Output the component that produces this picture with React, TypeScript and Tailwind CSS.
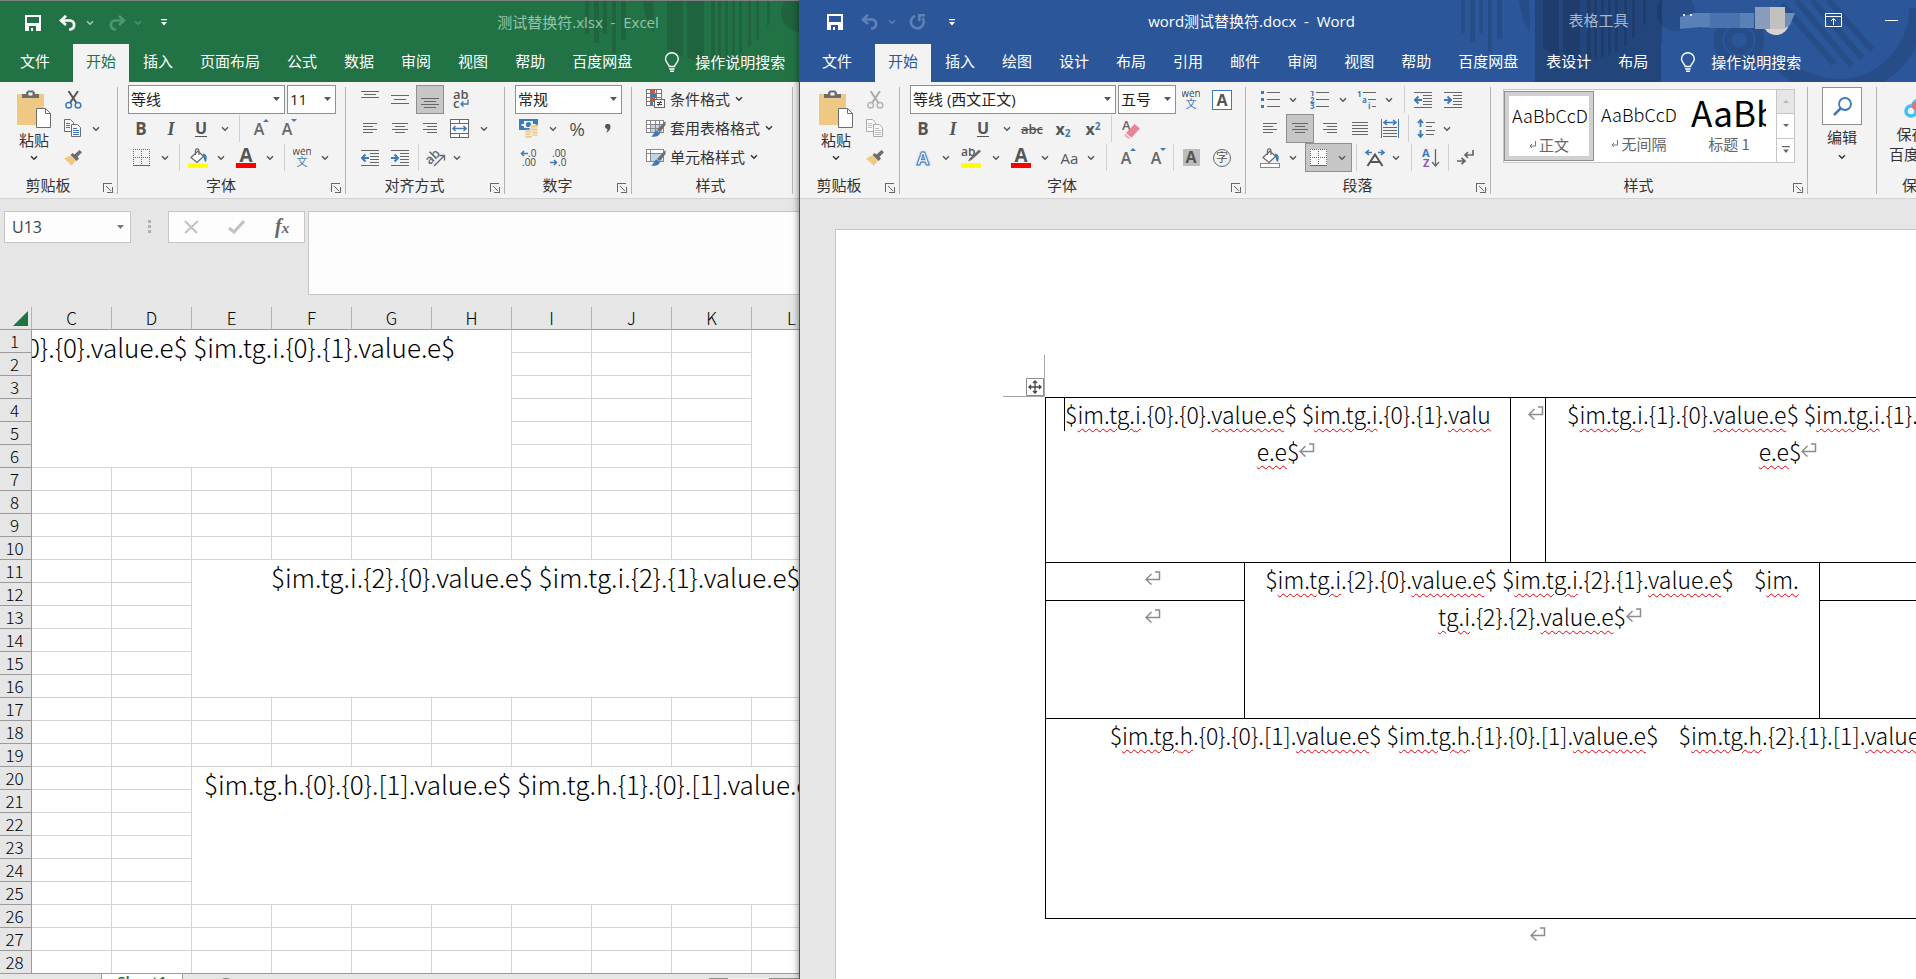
import React from "react";

type Kids = { children?: React.ReactNode };

/* ---------- shared pieces ---------- */

function Chevron({ className = "" }: { className?: string }) {
  return (
    <svg width="8" height="6" viewBox="0 0 8 6" className={className} fill="none" stroke="currentColor" strokeWidth="1.4">
      <path d="M1 1.200 4 4.200 7 1.200" />
    </svg>
  );
}

function Drop({ label, className = "w-[18px]" }: { label: string; className?: string }) {
  return (
    <button aria-label={label} className={`flex h-full shrink-0 items-center justify-center text-[#555] ${className}`}>
      <Chevron />
    </button>
  );
}

function Tool({ label, className = "w-[30px]", children }: { label: string; className?: string } & Kids) {
  return (
    <button aria-label={label} className={`flex h-full shrink-0 items-center justify-center text-[#555] ${className}`}>
      {children}
    </button>
  );
}

function Sep({ className = "mx-[5px]" }: { className?: string }) {
  return <span className={`h-[27px] w-px shrink-0 bg-[#d0d0d0] ${className}`} />;
}

function Row({ className = "", children }: { className?: string } & Kids) {
  return <div className={`flex h-[29px] items-center ${className}`}>{children}</div>;
}

function Launcher() {
  return (
    <svg width="10" height="10" viewBox="0 0 10 10" fill="none" stroke="#666" shapeRendering="crispEdges">
      <path d="M.5 9V.5H9M3 3l5 5M9.500 4v5.500H4" />
    </svg>
  );
}

function Group({ title, launcher = true, className = "", children }: { title: string; launcher?: boolean; className?: string } & Kids) {
  return (
    <section aria-label={title} className={`flex shrink-0 ${className}`}>
      <div className="flex min-w-0 flex-1 flex-col">
        <div className="h-[87px]">{children}</div>
        <div className="flex h-[26px] items-center">
          <span className="flex-1 pr-[3px] text-center whitespace-nowrap">{title}</span>
          {launcher && (
            <button aria-label={`${title}设置`} className="mt-[5px] flex w-[18px] justify-center">
              <Launcher />
            </button>
          )}
        </div>
      </div>
      <span className="mt-[2px] mb-[4px] w-px bg-[#b3b3b3]" />
    </section>
  );
}

function Combo({ label, value, className }: { label: string; value: string; className: string }) {
  return (
    <div className={`relative h-[29px] shrink-0 ${className}`}>
      <select aria-label={label} defaultValue={value} className="h-full w-full appearance-none border border-[#8f8f8f] bg-white pb-[2px] pl-[2px] text-[15px] text-[#222]">
        <option>{value}</option>
      </select>
      <svg width="7" height="4" viewBox="0 0 7 4" className="pointer-events-none absolute top-[12px] right-[5px]">
        <path d="M0 0h7L3.500 4z" fill="#555" />
      </svg>
    </div>
  );
}

function Tab({ active = "", className = "px-[13px]", children }: { active?: string; className?: string } & Kids) {
  return (
    <button className={`h-[38px] shrink-0 pb-[5px] whitespace-nowrap ${className} ${active}`}>{children}</button>
  );
}

/* ---------- title bar icons ---------- */

const SaveIcon = () => (
  <svg width="16" height="16" viewBox="0 0 16 16" shapeRendering="crispEdges">
    <path fill="#fff" fillRule="evenodd" d="M0 0h16v16H0zM2 2v6h12V2zM4 11v5h2v-3h2v3h3v-5z" />
  </svg>
);

const UndoIcon = () => (
  <svg width="19" height="16" viewBox="0 0 19 16" fill="none" stroke="currentColor" strokeWidth="2.600">
    <path d="M2 5.500h9.500a4.600 4.600 0 0 1 0 9H10" />
    <path d="M7 .8 2 5.500 7 10" />
  </svg>
);

const RedoIcon = () => (
  <svg width="19" height="16" viewBox="0 0 19 16" fill="none" stroke="currentColor" strokeWidth="2.600">
    <path d="M17 5.500H7.500a4.600 4.600 0 0 0 0 9H9" />
    <path d="M12 .8l5 4.700L12 10" />
  </svg>
);

const RepeatIcon = () => (
  <svg width="17" height="16" viewBox="0 0 17 16" fill="none" stroke="currentColor" strokeWidth="2.600">
    <path d="M6 1.900A6.400 6.400 0 1 0 13.500 4" />
    <path d="M10.300 7V1.300H16" />
  </svg>
);

const CustomizeIcon = () => (
  <svg width="6" height="7" viewBox="0 0 6 7">
    <path d="M0 0h6v1.300H0zM0 3h6L3 6.500z" fill="#fff" />
  </svg>
);

const Bulb = () => (
  <svg width="16" height="20" viewBox="0 0 16 20" fill="none" stroke="#fff" strokeWidth="1.400">
    <path d="M5.200 14.500c0-2.300-3.700-3.700-3.700-7.400a6.300 6.300 0 0 1 12.800 0c0 3.700-3.700 5.100-3.700 7.400zM5.200 17h5.400M6 19.300h4" />
  </svg>
);

/* ---------- ribbon icons ---------- */

const PasteIcon = () => (
  <svg width="35" height="39" viewBox="0 0 35 39">
    <rect x="0" y="4" width="27" height="31" rx="1" fill="#efc883" />
    <path d="M5 8V4h4V2.500L11 .5h5L18 2.500V4h4v4z" fill="#6d6d6d" />
    <rect x="11.500" y="2.500" width="4" height="3" fill="#f3f3f3" />
    <path d="M19.500 18.500h9l5 5v14h-14z" fill="#fff" stroke="#6d6d6d" />
    <path d="M28.500 18.500v5h5" fill="none" stroke="#6d6d6d" />
  </svg>
);

const CutIcon = ({ off = false }: { off?: boolean }) => (
  <svg width="17" height="18" viewBox="0 0 17 18" fill="none">
    <path d="M3.500 0 11.500 12M13 0 5 12" stroke={off ? "#ababab" : "#555"} strokeWidth="2" />
    <circle cx="3.700" cy="14.200" r="2.800" stroke={off ? "#b5b5b5" : "#3f7ab8"} strokeWidth="1.500" />
    <circle cx="13" cy="14.200" r="2.800" stroke={off ? "#b5b5b5" : "#3f7ab8"} strokeWidth="1.500" />
  </svg>
);

const CopyIcon = ({ off = false }: { off?: boolean }) => {
  const line = off ? "#ababab" : "#6d6d6d";
  const text = off ? "#bdbdbd" : "#3f7ab8";
  return (
    <svg width="18" height="19" viewBox="0 0 18 19" fill="#fafafa">
      <path d="M.5.5h6l3 3v9h-9z" stroke={line} />
      <path d="M2 4.500h4M2 6.500h4M2 8.500h4" stroke={text} />
      <path d="M7.500 5.500h6l3 3v9h-9z" stroke={line} />
      <path d="M9 9.500h4M9 11.500h6M9 13.500h6M9 15.500h6" stroke={text} />
    </svg>
  );
};

const BrushIcon = () => (
  <svg width="18" height="16" viewBox="0 0 18 16">
    <path d="M0 8.500 6 5.500l6 5.500-4.500 4.500z" fill="#efc883" />
    <path d="M6.500 5 8.500 3l2 1.500L15.500 0 18 2.200l-4.500 4.500 1.500 2-2.500 2.200z" fill="#6d6d6d" />
  </svg>
);

type LineSpec = [number, number, number];
function Lines({ w, h, lines }: { w: number; h: number; lines: LineSpec[] }) {
  return (
    <svg width={w} height={h} viewBox={`0 0 ${w} ${h}`} shapeRendering="crispEdges">
      {lines.map(([x, y, len]) => (
        <rect key={`${x}-${y}`} x={x} y={y} width={len} height="1" fill="#666" />
      ))}
    </svg>
  );
}

const TopAlign = () => <Lines w={18} h={18} lines={[[0, 0, 18], [3, 3, 12], [0, 6, 18]]} />;
const MidAlign = () => <Lines w={18} h={18} lines={[[0, 4, 18], [3, 8, 12], [0, 12, 18]]} />;
const BottomAlign = () => <Lines w={18} h={18} lines={[[0, 7, 18], [3, 10, 12], [0, 13, 18], [3, 16, 12]]} />;
const LeftAlign = () => <Lines w={14} h={11} lines={[[0, 0, 14], [0, 3, 10], [0, 6, 14], [0, 9, 10]]} />;
const CenterAlign = () => <Lines w={16} h={11} lines={[[0, 0, 16], [3, 3, 10], [0, 6, 16], [3, 9, 10]]} />;
const RightAlign = () => <Lines w={14} h={11} lines={[[0, 0, 14], [4, 3, 10], [0, 6, 14], [4, 9, 10]]} />;
const Justify = () => <Lines w={16} h={13} lines={[[0, 0, 16], [0, 3, 16], [0, 6, 16], [0, 9, 16], [0, 12, 16]]} />;

const Indent = ({ right = false }: { right?: boolean }) => (
  <svg width="18" height="16" viewBox="0 0 18 16">
    <path d="M0 .5h18M9 3.500h9M9 6.500h9M9 9.500h9M9 12.500h9M0 15.500h18" stroke="#666" shapeRendering="crispEdges" />
    <path d={right ? "M0 8h6M3.500 4.500 7 8l-3.500 3.500" : "M1.500 8H8M4.500 4.500 1 8l3.500 3.500"} stroke="#3f7ab8" strokeWidth="2" fill="none" />
  </svg>
);

const BordersIcon = () => (
  <svg width="17" height="17" viewBox="0 0 17 17" shapeRendering="crispEdges" fill="none" stroke="#666">
    <path d="M0 .5h17M0 8.500h17M.5 0v16M8.500 0v16M16.500 0v16" strokeDasharray="1 1" />
    <path d="M0 16.500h17" />
  </svg>
);

const FillIcon = ({ color, outline = false }: { color: string; outline?: boolean }) => (
  <svg width="20" height="20" viewBox="0 0 20 20">
    <path d="M3 9.500 10 3l5.500 5.500-6.500 6z" fill="#fff" stroke="#666" strokeWidth="1.200" />
    <path d="M7.500 7V2.500a1.700 1.700 0 0 1 3.400 0V7" fill="none" stroke="#666" strokeWidth="1.200" />
    <path d="M14.500 5.500c4 0 5.200 3.500 3.500 8.500-2-.5-2-3-2.500-5.500z" fill="#3f7ab8" />
    <rect x={outline ? 0.5 : 0} y={15.5} width={outline ? 19 : 20} height={outline ? 4 : 4.5} fill={color} stroke={outline ? "#888" : "none"} />
  </svg>
);

const FontColorIcon = () => (
  <span className="flex w-[20px] flex-col items-center">
    <span className="text-[19px] leading-[15px] font-bold text-[#555]">A</span>
    <span className="h-[5px] w-full bg-[#ff0000]" />
  </span>
);

const GrowFont = ({ up = true }: { up?: boolean }) => (
  <span className="relative text-[16px] leading-none font-semibold text-[#666]">
    A
    <svg width="6" height="3" viewBox="0 0 6 3" className="absolute -top-[2px] -right-[5px]">
      <path d={up ? "M0 3h6L3 0z" : "M0 0h6L3 3z"} fill="#3f7ab8" />
    </svg>
  </span>
);

const Phonetic = () => (
  <svg width="18" height="19" viewBox="0 0 18 19" textAnchor="middle">
    <text x="9" y="7" fontSize="10" fill="#444">wén</text>
    <text x="9" y="18" fontSize="11" fill="#3f7ab8">文</text>
  </svg>
);

const WrapIcon = () => (
  <svg width="18" height="19" viewBox="0 0 18 19" fontSize="13" fontWeight="600" fill="#555">
    <text x="1" y="9">ab</text>
    <text x="1" y="18">c</text>
    <path d="M16 9.500v4.500H9M11.500 11.500 9 14l2.500 2.500" fill="none" stroke="#3f7ab8" strokeWidth="1.400" />
  </svg>
);

const MergeIcon = () => (
  <svg width="20" height="19" viewBox="0 0 20 19" shapeRendering="crispEdges">
    <path d="M.5.5h18v18H.5zM.5 4.500h18M.5 14.500h18M9.500.5v4M9.500 14.500v4" fill="#fff" stroke="#666" />
    <path d="M3 9.500h13M5.500 7 3 9.500 5.500 12M13.500 7 16 9.500 13.500 12" fill="none" stroke="#3f7ab8" shapeRendering="auto" strokeWidth="1.500" />
  </svg>
);

const OrientIcon = () => (
  <svg width="20" height="18" viewBox="0 0 20 18" fill="none" stroke="#666" strokeWidth="1.300">
    <text x="0" y="13" fontSize="13" fontWeight="600" fill="#666" stroke="none" transform="rotate(-45 6 10)">ab</text>
    <path d="M8 17 18 7M13.500 6.500H18.500V11.500" />
  </svg>
);

const CurrencyIcon = () => (
  <svg width="20" height="19" viewBox="0 0 20 19">
    <path d="M0 0h19v11H0z" fill="#3f7ab8" />
    <path d="M2.500 2h14v7h-14z" fill="#f3f3f3" />
    <path d="M2 2h3v3H2zM14 2h3v3h-3zM2 7h3v2H2z" fill="#3f7ab8" />
    <circle cx="9.500" cy="5.500" r="2.600" fill="#3f7ab8" />
    <rect x="11" y="6" width="8" height="11" rx="1.500" fill="#efc883" stroke="#f3f3f3" strokeWidth=".6" />
    <rect x="6" y="11" width="7" height="8" rx="1.500" fill="#efc883" stroke="#f3f3f3" strokeWidth=".6" />
    <path d="M11 9h8M11 12h8M11 15h8M6 14h7M6 16.500h7" stroke="#f3f3f3" />
  </svg>
);

const DecimalIcon = ({ more }: { more: boolean }) => (
  <svg width="18" height="18" viewBox="0 0 18 18" fontSize="10" fill="#444">
    {more ? (
      <>
        <text x="8" y="8">.0</text>
        <text x="2" y="17">.00</text>
      </>
    ) : (
      <>
        <text x="2" y="8">.00</text>
        <text x="8" y="17">.0</text>
      </>
    )}
    <path d={more ? "M8 4.500H2M4 2 1.500 4.500 4 7" : "M0 13.500h6M4 11l2.500 2.500L4 16"} stroke="#3f7ab8" strokeWidth="1.600" fill="none" />
  </svg>
);

const CondIcon = () => (
  <svg width="20" height="19" viewBox="0 0 20 19" shapeRendering="crispEdges">
    <path d="M.5.5h15v16H.5z" fill="#fff" />
    <path d="M4.500 1h4v4h-4zM4.500 9h4v3h-4z" fill="#d35230" />
    <path d="M4.500 5h5v4h-5zM4.500 13h2v4h-2z" fill="#3f7ab8" />
    <path d="M.5.5h15v16H.5zM.5 4.500h15M.5 8.500h15M.5 12.500h15M4.500.5v16M10.500.5v12" fill="none" stroke="#777" />
    <path d="M8.500 10.500h10v8h-10z" fill="#fff" stroke="#666" />
    <path d="M11 13.500h5M11 15.500h5M15 12l-3 5" stroke="#444" shapeRendering="auto" />
  </svg>
);

const TableStyleIcon = ({ single = false }: { single?: boolean }) => (
  <svg width="20" height="18" viewBox="0 0 20 18">
    <path d="M.5 1.500h17v12H.5z" fill="#fff" />
    <path d="M4.500 5.500h12v8h-12z" fill="#bfd3ea" />
    <path d={single ? "M.5 1.500h17v12H.5zM.5 5.500h17M4.500 1.500v12" : "M.5 1.500h17v12H.5zM.5 5.500h17M.5 9.500h17M4.500 1.500v12M9.500 1.500v12M13.500 1.500v12"} fill="none" stroke="#888" shapeRendering="crispEdges" />
    <path d="M19.500 2v4L14 13l-3-2z" fill="#6d6d6d" />
    <path d="M10.500 11.500 14 14c-1 4-5 4-9 3.500 2.500-1 3-5 5.500-6z" fill="#3f7ab8" />
  </svg>
);

/* ---------- Word-only ribbon icons ---------- */

const EraserIcon = () => (
  <svg width="18" height="20" viewBox="0 0 18 20">
    <text x="0" y="11" fontSize="13" fontWeight="600" fill="#666">A</text>
    <path d="M4 14 12.500 5 18 9.500 9.500 18.500z" fill="#e98297" />
    <path d="M3 14.500 8.500 19.500l-2 .5L2.500 17z" fill="#f5a9b8" />
  </svg>
);

const HighlightIcon = () => (
  <svg width="20" height="20" viewBox="0 0 20 20">
    <text x="0" y="8" fontSize="12" fontWeight="600" fill="#555">ab</text>
    <path d="M18 1.500 20 3.500 10.500 12 7 13.500 8.500 10.500z" fill="#6d6d6d" />
    <path d="M0 15h20v5H0z" fill="#ffff00" />
  </svg>
);

const ListIcon = ({ kind }: { kind: "dots" | "numbers" | "levels" }) => (
  <svg width="19" height="18" viewBox="0 0 19 18" shapeRendering="crispEdges" fontSize="8" fontWeight="700" fill="#3f7ab8">
    {kind === "dots" && (
      <>
        <path d="M0 0h3v3H0zM0 7h3v3H0zM0 14h3v3H0z" />
        <path d="M6 1.500h13M6 8.500h13M6 15.500h13" stroke="#666" />
      </>
    )}
    {kind === "numbers" && (
      <>
        <text x="0" y="5">1</text>
        <text x="0" y="12">2</text>
        <text x="0" y="18">3</text>
        <path d="M6 1.500h13M6 8.500h13M6 15.500h13" stroke="#666" />
      </>
    )}
    {kind === "levels" && (
      <>
        <text x="0" y="6">1</text>
        <text x="5" y="12">a</text>
        <text x="11" y="18">i</text>
        <path d="M6 1.500h13M11 8.500h8M15 15.500h4" stroke="#666" />
      </>
    )}
  </svg>
);

const DistributeIcon = () => (
  <svg width="18" height="19" viewBox="0 0 18 19" fill="none" shapeRendering="crispEdges">
    <path d="M.5 0v19M17.500 0v19" stroke="#3f7ab8" />
    <path d="M2 8.500h14M2 11.500h14M2 14.500h14M2 17.500h14" stroke="#666" />
    <path d="M3 3.500h12M6 1 3 3.500 6 6M12 1l3 2.500L12 6" stroke="#3f7ab8" strokeWidth="1.600" shapeRendering="auto" />
  </svg>
);

const SpacingIcon = () => (
  <svg width="18" height="19" viewBox="0 0 18 19" fill="none">
    <path d="M3.500 1v7M1 4l2.500-3L6 4M3.500 11v7M1 15l2.500 3L6 15" stroke="#3f7ab8" strokeWidth="1.800" />
    <path d="M9 3.500h9M9 7.500h6M9 11.500h9M9 15.500h8" stroke="#666" shapeRendering="crispEdges" />
  </svg>
);

const ScaleIcon = () => (
  <svg width="20" height="18" viewBox="0 0 20 18" fill="none">
    <path d="M1 3.500h6M4 1 1 3.500 4 6M13 3.500h6M16 1l3 2.500L16 6" stroke="#3f7ab8" strokeWidth="1.600" />
    <path d="M2.500 17 10 5.500 17.500 17M5 13h10" stroke="#555" strokeWidth="2" />
  </svg>
);

const SortIcon = () => (
  <svg width="18" height="20" viewBox="0 0 18 20">
    <text x="0" y="9" fontSize="11" fontWeight="700" fill="#3f7ab8">A</text>
    <text x="1" y="19" fontSize="11" fontWeight="700" fill="#8c55b5">Z</text>
    <path d="M13.500 1v17M10 14l3.500 4 3.500-4" fill="none" stroke="#666" strokeWidth="1.300" />
  </svg>
);

const MarksIcon = () => (
  <svg width="18" height="15" viewBox="0 0 18 15" fill="none" stroke="#666" strokeWidth="1.700">
    <path d="M16 0v5H8M11 2 8 5l3 3M0 11h7M4.500 8 8 11l-3.500 3" />
  </svg>
);

/* ---------- window header artwork ---------- */

function Circuit({ id, className, tone }: { id: string; className: string; tone: string }) {
  return (
    <svg width="240" height="82" viewBox="0 0 240 82" className={`pointer-events-none absolute top-0 ${className}`} fill={tone}>
      <defs>
        <clipPath id={id}>
          <circle cx="122" cy="-10" r="70" />
        </clipPath>
      </defs>
      <path d="M0 0h4v33H0zM9 0h5v42H9zM18 0h4v33h-4zM27 0h4v52h-4zM36 0h5v39h-5zM58 0h10l1 32Q60 20 58 0z" />
      <g clipPath={`url(#${id})`}>
        <path d="M82 0h16v60H82zM102 0h17v60h-17zM126 0h4v60h-4zM133 0h3v60h-3zM140 0h3v60h-3zM147 0h3v60h-3zM154 0h3v60h-3zM163 0h3v60h-3zM171 0h3v60h-3zM182 0h3v60h-3z" />
      </g>
      <circle cx="215" cy="12" r="19" />
    </svg>
  );
}

function Orbit({ className, tone }: { className: string; tone: string }) {
  return (
    <svg width="216" height="82" viewBox="0 0 216 82" className={`pointer-events-none absolute top-0 ${className}`} fill="none" stroke={tone}>
      <circle cx="39" cy="40" r="21" strokeWidth="9" />
      <circle cx="39" cy="40" r="11" strokeWidth="7" />
      <circle cx="138" cy="8" r="79" strokeWidth="16" strokeDasharray="190 400" />
      <path d="M82 4l52 60M96 0l56 66M112 0l50 58M128 0l44 50" strokeWidth="6" />
    </svg>
  );
}

/* ---------- Excel ---------- */

const columns = ["C", "D", "E", "F", "G", "H", "I", "J", "K", "L"];
const rowNumbers = Array.from({ length: 28 }, (_, i) => i + 1);

function GridCells({ count }: { count: number }) {
  return (
    <>
      {Array.from({ length: count }, (_, i) => (
        <td key={i} className="border-r border-b border-[#d4d4d4]" />
      ))}
    </>
  );
}

function SheetRow({ n }: { n: number }) {
  let cells: React.ReactNode;
  const merged = "border-r border-b border-[#d4d4d4] p-0 align-top";
  const text = "-mt-[2px] flex overflow-hidden text-[26px] leading-[38px] font-light whitespace-pre";
  if (n === 1) {
    cells = (
      <>
        <td colSpan={6} rowSpan={6} className={merged}>
          <div className={`${text} justify-end pr-[56px]`}>
            <span className="shrink-0">{"$im.tg.i.{0}.{0}.value.e$ $im.tg.i.{0}.{1}.value.e$"}</span>
          </div>
        </td>
        <GridCells count={3} />
        <td rowSpan={6} className={merged} />
      </>
    );
  } else if (n < 7) cells = <GridCells count={3} />;
  else if (n === 11)
    cells = (
      <>
        <GridCells count={2} />
        <td colSpan={8} rowSpan={6} className={merged}>
          <div className={`${text} pl-[79px]`}>{"$im.tg.i.{2}.{0}.value.e$ $im.tg.i.{2}.{1}.value.e$"}</div>
        </td>
      </>
    );
  else if (n === 20)
    cells = (
      <>
        <GridCells count={2} />
        <td colSpan={8} rowSpan={6} className={merged}>
          <div className={`${text} pl-[12px]`}>{"$im.tg.h.{0}.{0}.[1].value.e$ $im.tg.h.{1}.{0}.[1].value.e$"}</div>
        </td>
      </>
    );
  else if ((n > 11 && n < 17) || (n > 20 && n < 26)) cells = <GridCells count={2} />;
  else cells = <GridCells count={10} />;
  return (
    <tr className="h-[23px]">
      <th scope="row" className="border-r border-b border-[#9b9b9b] bg-[#e6e6e6] p-0 pr-[2px] text-center text-[17px] leading-[20px] font-light">
        {n}
      </th>
      {cells}
    </tr>
  );
}

function Excel() {
  return (
    <main className="flex min-w-0 flex-col overflow-hidden border-t border-[#808080] bg-[#e6e6e6]">
      <header className="relative bg-[#217346] text-white">
        <Circuit id="arc-sheet" className="left-[585px]" tone="#1f633f" />
        <div className="relative flex h-[43px] items-center">
          <div className="flex w-[357px] shrink-0 items-center pl-[25px]">
            <button aria-label="保存"><SaveIcon /></button>
            <button aria-label="撤消" className="ml-[18px]"><UndoIcon /></button>
            <button aria-label="撤消选项" className="ml-[8px] text-[#a9ccb8]"><Chevron /></button>
            <button aria-label="恢复" className="ml-[13px] text-[#4f9570]"><RedoIcon /></button>
            <button aria-label="恢复选项" className="ml-[8px] text-[#4f9570]"><Chevron /></button>
            <button aria-label="自定义快速访问工具栏" className="ml-[19px]"><CustomizeIcon /></button>
          </div>
          <h1 className="flex-1 pb-[2px] text-center whitespace-pre text-[#97c4a9]">{"测试替换符.xlsx  -  Excel"}</h1>
        </div>
        <nav className="relative flex gap-px pl-[7px]">
          <Tab>文件</Tab>
          <Tab active="ml-[9px] bg-[#f3f3f3] text-[#217346]">开始</Tab>
          <Tab>插入</Tab>
          <Tab>页面布局</Tab>
          <Tab>公式</Tab>
          <Tab>数据</Tab>
          <Tab>审阅</Tab>
          <Tab>视图</Tab>
          <Tab>帮助</Tab>
          <Tab>百度网盘</Tab>
          <button className="ml-[18px] flex shrink-0 items-center gap-[15px] pb-[2px] whitespace-nowrap"><Bulb />操作说明搜索</button>
        </nav>
      </header>

      <div className="flex h-[117px] shrink-0 border-b border-[#d2d2d2] bg-[#f3f3f3] pt-[3px] text-[#333]">
        <Group title="剪贴板" className="w-[118px]">
          <div className="flex">
            <button className="flex w-[59px] flex-col items-center pt-[5px] pl-[9px]">
              <PasteIcon />
              <span className="leading-[22px]">粘贴</span>
              <Chevron className="mt-[4px]" />
            </button>
            <div>
              <Row><Tool label="剪切" className="w-[28px]"><CutIcon /></Tool></Row>
              <Row>
                <Tool label="复制" className="w-[28px]"><CopyIcon /></Tool>
                <Drop label="复制选项" />
              </Row>
              <Row><Tool label="格式刷" className="w-[28px]"><BrushIcon /></Tool></Row>
            </div>
          </div>
        </Group>

        <Group title="字体" className="w-[228px]">
          <Row className="gap-[2px] pl-[10px]">
            <Combo label="字体" value="等线" className="w-[157px]" />
            <Combo label="字号" value="11" className="w-[49px]" />
          </Row>
          <Row className="pl-[8px]">
            <Tool label="加粗"><b className="text-[17px]">B</b></Tool>
            <Tool label="倾斜"><b className="font-['Liberation_Serif',serif] text-[18px] italic">I</b></Tool>
            <Tool label="下划线"><b className="border-b border-[#555] text-[16px] leading-[16px]">U</b></Tool>
            <Drop label="下划线选项" />
            <Sep />
            <Tool label="增大字号" className="w-[28px]"><GrowFont /></Tool>
            <Tool label="减小字号" className="w-[28px]"><GrowFont up={false} /></Tool>
          </Row>
          <Row className="pl-[8px]">
            <Tool label="边框"><BordersIcon /></Tool>
            <Drop label="边框选项" />
            <Sep />
            <Tool label="填充颜色" className="w-[26px]"><FillIcon color="#ffff00" /></Tool>
            <Drop label="填充颜色选项" className="w-[20px]" />
            <Tool label="字体颜色"><FontColorIcon /></Tool>
            <Drop label="字体颜色选项" />
            <Sep />
            <Tool label="拼音" className="w-[24px]"><Phonetic /></Tool>
            <Drop label="拼音选项" className="w-[22px]" />
          </Row>
        </Group>

        <Group title="对齐方式" className="w-[159px]">
          <Row className="pl-[9px]">
            <Tool label="顶端对齐"><TopAlign /></Tool>
            <Tool label="垂直居中"><MidAlign /></Tool>
            <Tool label="底端对齐" className="mx-px w-[28px] border border-[#8f8f8f] bg-[#c6c6c6]"><BottomAlign /></Tool>
            <Tool label="自动换行" className="w-[32px]"><WrapIcon /></Tool>
          </Row>
          <Row className="pl-[9px]">
            <Tool label="左对齐"><LeftAlign /></Tool>
            <Tool label="居中"><CenterAlign /></Tool>
            <Tool label="右对齐"><RightAlign /></Tool>
            <Tool label="合并后居中"><MergeIcon /></Tool>
            <Drop label="合并选项" />
          </Row>
          <Row className="pl-[9px]">
            <Tool label="减少缩进量"><Indent /></Tool>
            <Tool label="增加缩进量"><Indent right /></Tool>
            <Sep className="mx-[3px]" />
            <Tool label="方向" className="w-[28px]"><OrientIcon /></Tool>
            <Drop label="方向选项" className="w-[14px]" />
          </Row>
        </Group>

        <Group title="数字" className="w-[127px]">
          <Row className="pl-[10px]"><Combo label="数字格式" value="常规" className="w-[107px]" /></Row>
          <Row className="pl-[9px]">
            <Tool label="会计数字格式"><CurrencyIcon /></Tool>
            <Drop label="会计数字格式选项" />
            <Tool label="百分比样式"><span className="text-[19px]">%</span></Tool>
            <Tool label="千位分隔样式" className="w-[32px]">
              <svg width="6" height="9" viewBox="0 0 6 9"><path d="M0 2.500a2.500 2.500 0 0 1 5.500 0c0 3-2 5.500-4.500 6.200 1-1.200 1.500-2.500 1.400-3.700A2.500 2.500 0 0 1 0 2.500z" fill="#555" /></svg>
            </Tool>
          </Row>
          <Row className="pl-[9px]">
            <Tool label="增加小数位数"><DecimalIcon more /></Tool>
            <Tool label="减少小数位数"><DecimalIcon more={false} /></Tool>
          </Row>
        </Group>

        <Group title="样式" launcher={false} className="w-[161px]">
          <Row className="pb-[2px] pl-[14px]"><button className="flex items-center gap-[4px]"><CondIcon />条件格式<Chevron className="ml-[1px]" /></button></Row>
          <Row className="pb-[2px] pl-[14px]"><button className="flex items-center gap-[4px]"><TableStyleIcon />套用表格格式<Chevron className="ml-[1px]" /></button></Row>
          <Row className="pb-[2px] pl-[14px]"><button className="flex items-center gap-[4px]"><TableStyleIcon single />单元格样式<Chevron className="ml-[1px]" /></button></Row>
        </Group>
      </div>

      <div className="flex items-start pt-[12px] pl-[4px]">
        <div className="relative w-[127px] shrink-0">
          <input aria-label="名称框" defaultValue="U13" className="h-[32px] w-full border border-[#c6c6c6] bg-[#fdfdfd] pl-[7px] text-[16px] text-[#444]" />
          <svg width="7" height="4" viewBox="0 0 7 4" className="pointer-events-none absolute top-[14px] right-[7px]"><path d="M0 0h7L3.500 4z" fill="#777" /></svg>
        </div>
        <svg width="37" height="32" viewBox="0 0 37 32" fill="#b0b0b0"><path d="M17 9h3v3h-3zM17 14h3v3h-3zM17 19h3v3h-3z" /></svg>
        <div className="flex h-[32px] w-[137px] shrink-0 items-center justify-around border border-[#c6c6c6] bg-[#fdfdfd]">
          <button aria-label="取消"><svg width="15" height="14" viewBox="0 0 15 14" fill="none" stroke="#c2c2c2" strokeWidth="2"><path d="M1 1l12 12M14 1 1 13" /></svg></button>
          <button aria-label="输入"><svg width="17" height="14" viewBox="0 0 17 14" fill="none" stroke="#c2c2c2" strokeWidth="3"><path d="M1 8l5 4L16 1" /></svg></button>
          <button aria-label="插入函数" className="pb-[3px] font-['Liberation_Serif',serif] text-[20px] leading-none font-bold text-[#666] italic">f<span className="text-[15px]">x</span></button>
        </div>
        <textarea aria-label="编辑栏" className="ml-[3px] h-[84px] min-w-0 flex-1 resize-none border border-r-0 border-[#c6c6c6] bg-[#fdfdfd]" />
      </div>

      <div className="mt-[12px] min-h-0 flex-1 overflow-hidden font-['Noto_Sans_CJK_SC',sans-serif] text-black">
        <table className="w-[832px] table-fixed border-separate border-spacing-0 bg-white">
          <colgroup>
            <col className="w-[32px]" />
            {columns.map((c) => <col key={c} className="w-[80px]" />)}
          </colgroup>
          <thead>
            <tr className="h-[23px] bg-[#e6e6e6]">
              <th className="border-r border-b border-r-[#b5b5b5] border-b-[#9b9b9b] p-0">
                <svg width="15" height="15" viewBox="0 0 15 15" className="ml-[13px]"><path d="M15 0v15H0z" fill="#217346" /></svg>
              </th>
              {columns.map((c) => (
                <th key={c} scope="col" className="border-r border-b border-r-[#b5b5b5] border-b-[#9b9b9b] p-0 text-[17px] leading-[22px] font-light">{c}</th>
              ))}
            </tr>
          </thead>
          <tbody>{rowNumbers.map((n) => <SheetRow key={n} n={n} />)}</tbody>
        </table>
      </div>

      <footer className="flex h-[6px] shrink-0 overflow-hidden border-t border-[#9b9b9b] pl-[101px]">
        <a href="#sheet1" className="-mt-px h-[30px] w-[82px] border-x border-[#9b9b9b] bg-white text-center leading-[16px] font-semibold text-[#217346]">Sheet1</a>
        <svg width="20" height="20" viewBox="0 0 20 20" className="mt-[4px] ml-[34px] shrink-0" fill="none" stroke="#777"><circle cx="9" cy="9" r="8.500" /></svg>
        <div className="mt-[4px] ml-auto flex h-[20px] w-[90px] shrink-0 bg-[#f3f3f3]">
          <span className="w-[19px] bg-[#8f8f8f]" />
          <span className="ml-[41px] flex-1 bg-[#8f8f8f]" />
        </div>
      </footer>
    </main>
  );
}

/* ---------- Word ---------- */

function StyleCard({ sample, name, mark = true, selected = false, large = false }: { sample: string; name: string; mark?: boolean; selected?: boolean; large?: boolean }) {
  return (
    <button className={`flex h-[70px] w-[90px] shrink-0 flex-col overflow-hidden bg-white px-[3px] ${selected ? "border border-[#8f8f8f] outline-4 -outline-offset-5 outline-[#d0d0d0]" : ""}`}>
      <span className={`ml-[4px] flex h-[41px] w-[75px] items-end overflow-hidden text-left whitespace-nowrap text-black ${large ? "text-[35px] leading-[40px]" : "text-[18px] leading-[36px] font-light"}`}>
        {sample}
      </span>
      <span className="flex w-full items-center justify-center gap-[3px] leading-[24px] text-[#666]">
        {mark && <svg width="7" height="8" viewBox="0 0 7 8" fill="none" stroke="#777"><path d="M6.500 0v5H1M3 3 1 5l2 2" /></svg>}
        {name}
      </span>
    </button>
  );
}

function Return() {
  return (
    <span className="inline-block w-0 align-[4px]">
      <svg width="16" height="14" viewBox="0 0 16 14" fill="none" stroke="#8c8c8c" strokeWidth="1.500">
        <path d="M10 1h4.500v7.500H1.500M6.500 3 1 8.500l5.500 5" />
      </svg>
    </span>
  );
}

function Bad({ children }: Kids) {
  return <span className="underline decoration-red-600 decoration-wavy decoration-1 underline-offset-4">{children}</span>;
}

function Token({ kind, refs }: { kind: "i" | "h"; refs: string }) {
  return (
    <>
      $<Bad>im.tg.{kind}</Bad>.{refs}.<Bad>value.e</Bad>$
    </>
  );
}

function Cell({ colSpan, rowSpan, children }: { colSpan?: number; rowSpan?: number } & Kids) {
  return (
    <td colSpan={colSpan} rowSpan={rowSpan} className="border border-black p-0 text-center align-top whitespace-pre">
      <div className="-mt-[2px]">{children}</div>
    </td>
  );
}

function Word() {
  return (
    <section className="relative flex min-w-0 flex-col overflow-hidden border-l border-[#2b579a] bg-[#e6e6e6]">
      <header className="relative shrink-0 overflow-hidden bg-[#2b579a] text-white">
        <Circuit id="arc-doc" className="left-[661px]" tone="#264d87" />
        <Orbit className="left-[900px]" tone="#264d87" />
        <div className="relative flex h-[44px] items-center">
          <div className="flex w-[168px] shrink-0 items-center pl-[27px]">
            <button aria-label="保存"><SaveIcon /></button>
            <button aria-label="撤消" className="ml-[18px] text-[#5f82b5]"><UndoIcon /></button>
            <button aria-label="撤消选项" className="ml-[8px] text-[#5f82b5]"><Chevron /></button>
            <button aria-label="重复" className="ml-[13px] text-[#5f82b5]"><RepeatIcon /></button>
            <button aria-label="自定义快速访问工具栏" className="ml-[23px]"><CustomizeIcon /></button>
          </div>
          <h1 className="flex-1 pb-[2px] text-center whitespace-pre">{"word测试替换符.docx  -  Word"}</h1>
          <div className="flex h-full w-[127px] shrink-0 items-center justify-center bg-black/20 pb-[4px] text-[#a8b8d2]">表格工具</div>
          <div className="flex w-[254px] shrink-0 items-center pb-[4px]">
            <svg role="img" aria-label="账户" width="116" height="30" viewBox="0 0 116 30" className="ml-[18px]">
              <path d="M0 12 14 8h60v15H40L20 22 0 24z" fill="#5a80b8" />
              <path d="M30 8h30v15H30z" fill="#4a72ae" />
              <path d="M3 9h2v2H3zM10 9h2v2h-2z" fill="#dfe6f0" />
              <circle cx="96" cy="17" r="13" fill="#d9d4cf" />
              <path d="M105 8h10l-5 12-5 3z" fill="#6f8db9" />
              <path d="M75 2h15v22H75z" fill="#8a9cbb" />
              <path d="M90 2h15v22H90z" fill="#c3c0c0" />
            </svg>
            <button aria-label="功能区显示选项" className="ml-[29px]">
              <svg width="17" height="14" viewBox="0 0 17 14" fill="none" stroke="#fff"><path d="M.5.5h16v13H.5zM.5 3.500h16M8.500 12V6M6 8l2.500-2.500L11 8" /></svg>
            </button>
            <button aria-label="最小化" className="ml-[43px] h-px w-[13px] bg-white" />
          </div>
        </div>
        <nav className="relative flex gap-px pl-[9px]">
          <Tab>文件</Tab>
          <Tab active="ml-[9px] bg-[#f3f3f3] text-[#2b579a]">开始</Tab>
          <Tab>插入</Tab>
          <Tab>绘图</Tab>
          <Tab>设计</Tab>
          <Tab>布局</Tab>
          <Tab>引用</Tab>
          <Tab>邮件</Tab>
          <Tab>审阅</Tab>
          <Tab>视图</Tab>
          <Tab>帮助</Tab>
          <Tab>百度网盘</Tab>
          <div className="ml-[3px] flex gap-px bg-black/20">
            <Tab className="pr-[13px] pl-[11px]">表设计</Tab>
            <Tab>布局</Tab>
          </div>
          <button className="ml-[18px] flex shrink-0 items-center gap-[15px] pb-[2px] whitespace-nowrap"><Bulb />操作说明搜索</button>
        </nav>
      </header>

      <div className="flex h-[117px] shrink-0 border-b border-[#d2d2d2] bg-[#f3f3f3] pt-[3px] text-[#333]">
        <Group title="剪贴板" className="w-[100px]">
          <div className="flex">
            <button className="flex w-[61px] flex-col items-center pt-[5px] pl-[11px]">
              <PasteIcon />
              <span className="leading-[22px]">粘贴</span>
              <Chevron className="mt-[4px]" />
            </button>
            <div>
              <Row><Tool label="剪切" className="w-[28px]"><CutIcon off /></Tool></Row>
              <Row><Tool label="复制" className="w-[28px]"><CopyIcon off /></Tool></Row>
              <Row><Tool label="格式刷" className="w-[28px]"><BrushIcon /></Tool></Row>
            </div>
          </div>
        </Group>

        <Group title="字体" className="w-[346px]">
          <Row className="pl-[10px]">
            <Combo label="字体" value="等线 (西文正文)" className="mr-[2px] w-[206px]" />
            <Combo label="字号" value="五号" className="w-[58px]" />
            <Tool label="拼音指南"><Phonetic /></Tool>
            <Tool label="字符边框" className="w-[32px]">
              <span className="h-[20px] w-[20px] border border-[#3f7ab8] bg-white text-[16px] leading-[18px] font-bold">A</span>
            </Tool>
          </Row>
          <Row className="pl-[8px]">
            <Tool label="加粗"><b className="text-[17px]">B</b></Tool>
            <Tool label="倾斜"><b className="font-['Liberation_Serif',serif] text-[18px] italic">I</b></Tool>
            <Tool label="下划线"><b className="border-b border-[#555] text-[16px] leading-[16px]">U</b></Tool>
            <Drop label="下划线选项" />
            <Tool label="删除线" className="w-[32px]"><s className="text-[13px] font-semibold">abc</s></Tool>
            <Tool label="下标"><b className="text-[16px]">x<sub className="text-[10px] text-[#3f7ab8]">2</sub></b></Tool>
            <Tool label="上标"><b className="text-[16px]">x<sup className="text-[10px] text-[#3f7ab8]">2</sup></b></Tool>
            <Sep className="mx-[3px]" />
            <Tool label="清除格式" className="w-[32px]"><EraserIcon /></Tool>
          </Row>
          <Row className="pl-[8px]">
            <Tool label="文本效果">
              <span className="text-[18px] leading-none font-bold text-white [-webkit-text-stroke:1px_#3f7ab8] [text-shadow:0_0_3px_#6fb1ef]">A</span>
            </Tool>
            <Drop label="文本效果选项" className="w-[16px]" />
            <Tool label="突出显示" className="w-[34px]"><HighlightIcon /></Tool>
            <Drop label="突出显示选项" className="w-[16px]" />
            <Tool label="字体颜色" className="w-[34px]"><FontColorIcon /></Tool>
            <Drop label="字体颜色选项" className="w-[14px]" />
            <Tool label="更改大小写" className="w-[33px]"><span className="pl-[2px] text-[15px]">Aa</span></Tool>
            <Drop label="大小写选项" className="w-[12px]" />
            <Sep className="mr-[4px] ml-[9px]" />
            <Tool label="增大字号"><GrowFont /></Tool>
            <Tool label="减小字号"><GrowFont up={false} /></Tool>
            <Sep className="mx-[2px]" />
            <Tool label="字符底纹"><span className="h-[17px] w-[17px] bg-[#bdbdbd] text-[16px] leading-[17px] font-bold">A</span></Tool>
            <Tool label="带圈字符" className="w-[32px]">
              <span className="h-[18px] w-[18px] rounded-full border border-[#666] text-[12px] leading-[16px]">字</span>
            </Tool>
          </Row>
        </Group>

        <Group title="段落" className="w-[245px]">
          <Row className="pl-[9px]">
            <Tool label="项目符号"><ListIcon kind="dots" /></Tool>
            <Drop label="项目符号选项" className="w-[16px]" />
            <Tool label="编号" className="w-[36px]"><ListIcon kind="numbers" /></Tool>
            <Drop label="编号选项" className="w-[12px]" />
            <Tool label="多级列表" className="w-[34px]"><ListIcon kind="levels" /></Tool>
            <Drop label="多级列表选项" className="w-[12px]" />
            <Sep className="mr-[4px] ml-[9px]" />
            <Tool label="减少缩进量" className="w-[28px]"><Indent /></Tool>
            <Tool label="增加缩进量" className="w-[32px]"><Indent right /></Tool>
          </Row>
          <Row className="pl-[9px]">
            <Tool label="左对齐"><LeftAlign /></Tool>
            <Tool label="居中" className="mx-px w-[28px] border border-[#8f8f8f] bg-[#c6c6c6]"><CenterAlign /></Tool>
            <Tool label="右对齐"><RightAlign /></Tool>
            <Tool label="两端对齐"><Justify /></Tool>
            <Tool label="分散对齐"><DistributeIcon /></Tool>
            <Sep className="mx-[3px]" />
            <Tool label="行和段落间距" className="w-[28px]"><SpacingIcon /></Tool>
            <Drop label="间距选项" className="w-[14px]" />
          </Row>
          <Row className="pl-[9px]">
            <Tool label="底纹"><FillIcon color="#fff" outline /></Tool>
            <Drop label="底纹选项" className="w-[16px]" />
            <button aria-label="边框" className="ml-[4px] flex h-full w-[47px] items-center justify-between border border-[#8f8f8f] bg-[#c6c6c6] pr-[5px] pl-[4px] text-[#555]">
              <span className="bg-white"><BordersIcon /></span>
              <Chevron />
            </button>
            <Sep className="mr-[3px] ml-[4px]" />
            <Tool label="中文版式"><ScaleIcon /></Tool>
            <Drop label="中文版式选项" className="w-[12px]" />
            <Sep className="mr-[4px] ml-[9px]" />
            <Tool label="排序"><SortIcon /></Tool>
            <Sep className="mr-[3px] ml-[2px]" />
            <Tool label="显示编辑标记" className="w-[28px]"><MarksIcon /></Tool>
          </Row>
        </Group>

        <Group title="样式" className="w-[317px]">
          <div className="ml-[12px] flex w-[292px] pt-[4px]">
            <div className="flex h-[74px] min-w-0 flex-1 items-center overflow-hidden border border-r-0 border-[#c6c6c6] bg-white font-['Noto_Sans_CJK_SC',sans-serif]">
              <StyleCard sample="AaBbCcDc" name="正文" selected />
              <StyleCard sample="AaBbCcDc" name="无间隔" />
              <StyleCard sample="AaBb" name="标题 1" mark={false} large />
            </div>
            <div className="flex h-[74px] w-[19px] flex-col divide-y divide-[#c6c6c6] border border-[#c6c6c6]">
              <button aria-label="上一行" className="flex flex-1 items-center justify-center bg-[#e6e6e6]"><svg width="6" height="3" viewBox="0 0 6 3"><path d="M0 3h6L3 0z" fill="#b5b5b5" /></svg></button>
              <button aria-label="下一行" className="flex flex-1 items-center justify-center bg-white"><svg width="6" height="3" viewBox="0 0 6 3"><path d="M0 0h6L3 3z" fill="#666" /></svg></button>
              <button aria-label="其他样式" className="flex flex-1 items-center justify-center bg-white"><svg width="8" height="8" viewBox="0 0 8 8"><path d="M0 0h8v1.200H0zM1 3.500h6L4 7z" fill="#666" /></svg></button>
            </div>
          </div>
        </Group>

        <section className="flex w-[69px] shrink-0">
          <button className="flex flex-1 flex-col items-center pt-[2px]">
            <span className="flex h-[38px] w-[40px] items-center justify-center border border-[#8f8f8f] bg-white">
              <svg width="19" height="19" viewBox="0 0 19 19" fill="none" stroke="#3f7ab8"><circle cx="12" cy="7" r="6" strokeWidth="1.800" /><path d="M7.500 11.500 1 18" strokeWidth="2.500" /></svg>
            </span>
            <span className="leading-[24px]">编辑</span>
            <Chevron className="mt-[5px]" />
          </button>
          <span className="mt-[2px] mb-[4px] w-px bg-[#b3b3b3]" />
        </section>

        <section className="w-[86px] shrink-0 pl-[12px]">
          <button className="flex w-[60px] flex-col items-center pt-[12px]">
            <svg width="30" height="22" viewBox="0 0 30 22" fill="none">
              <circle cx="7" cy="14" r="5" stroke="#3cc3f5" strokeWidth="3.600" />
              <circle cx="22" cy="14" r="5" stroke="#2f8ff0" strokeWidth="3.600" />
              <path d="M9 10a6 6 0 0 1 12-1" stroke="#3cc3f5" strokeWidth="4" />
              <circle cx="12" cy="9" r="4" fill="#f06a7a" />
            </svg>
            <span className="mt-[5px] leading-[20px] whitespace-nowrap">保存到</span>
            <span className="leading-[20px] whitespace-nowrap">百度网盘</span>
          </button>
          <div className="mt-[11px] w-[56px] text-center">保存</div>
        </section>
      </div>

      <div className="min-h-0 flex-1 overflow-hidden pt-[30px] pl-[35px]">
        <article className="relative h-full border-t border-l border-[#c6c6c6] bg-white pt-[167px] pl-[209px] font-['Noto_Sans_CJK_SC',sans-serif] text-[23px] leading-[37px] font-light text-black">
          <svg width="42" height="42" viewBox="0 0 42 42" fill="none" className="absolute top-[125px] left-[167px]">
            <path d="M41.500 0v42M0 41.500h42" stroke="#a6a6a6" shapeRendering="crispEdges" />
            <path d="M23.500 23.500h17v17h-17z" fill="#fff" stroke="#8c8c8c" />
            <path d="M32 26v12M26 32h12M30 28l2-2 2 2M30 36l2 2 2-2M28 30l-2 2 2 2M36 30l2 2-2 2" stroke="#444" strokeWidth="1.300" />
          </svg>
          <table className="w-[970px] table-fixed border-collapse">
            <colgroup>
              <col className="w-[199px]" />
              <col className="w-[266px]" />
              <col className="w-[35px]" />
              <col className="w-[274px]" />
              <col className="w-[195px]" />
            </colgroup>
            <tbody>
              <tr className="h-[165px]">
                <Cell colSpan={2}>
                  <span className="relative"><span className="absolute top-0 -left-px h-[34px] w-px bg-black" /></span>
                  <Token kind="i" refs="{0}.{0}" /> $<Bad>im.tg.i</Bad>{".{0}.{1}."}<Bad>valu</Bad>
                  <br />
                  <Bad>e.e</Bad>$<Return />
                </Cell>
                <Cell><Return /></Cell>
                <Cell colSpan={2}>
                  <Token kind="i" refs="{1}.{0}" /> $<Bad>im.tg.i</Bad>{".{1}.{1}."}<Bad>valu</Bad>
                  <br />
                  <Bad>e.e</Bad>$<Return />
                </Cell>
              </tr>
              <tr className="h-[38px]">
                <Cell><Return /></Cell>
                <Cell colSpan={3} rowSpan={2}>
                  <Token kind="i" refs="{2}.{0}" /> <Token kind="i" refs="{2}.{1}" />{"    "}$<Bad>im.</Bad>
                  <br />
                  <Bad>tg.i</Bad>{".{2}.{2}."}<Bad>value.e</Bad>$<Return />
                </Cell>
                <Cell><Return /></Cell>
              </tr>
              <tr className="h-[118px]">
                <Cell><Return /></Cell>
                <Cell><Return /></Cell>
              </tr>
              <tr className="h-[200px]">
                <Cell colSpan={5}>
                  <Token kind="h" refs="{0}.{0}.[1]" /> <Token kind="h" refs="{1}.{0}.[1]" />{"    "}<Token kind="h" refs="{2}.{1}.[1]" />
                </Cell>
              </tr>
            </tbody>
          </table>
          <p className="-mt-[2px] w-[970px] text-center"><Return /></p>
        </article>
      </div>
    </section>
  );
}

export default function App() {
  return (
    <div className="grid h-screen grid-cols-[799fr_1117fr] overflow-hidden font-['Open_Sans','Noto_Sans_CJK_SC',sans-serif] text-[15px] leading-[20px]">
      <Excel />
      <div className="relative grid min-h-0 min-w-0 shadow-[0_0_7px_rgba(0,0,0,0.55)]">
        <Word />
      </div>
    </div>
  );
}
